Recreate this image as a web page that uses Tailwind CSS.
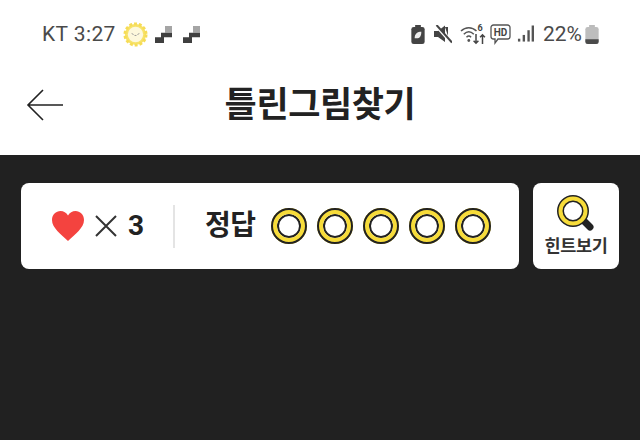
<!DOCTYPE html>
<html lang="ko">
<head>
    <meta charset="UTF-8">
    <title>틀린그림찾기</title>
    <script src="https://cdn.jsdelivr.net/npm/@tailwindcss/browser@4"></script>
</head>
<body class="w-[640px] h-[440px] overflow-hidden bg-white font-['Roboto','Noto_Sans_CJK_KR',sans-serif]">
    <!-- status bar -->
    <div class="h-[68px] pl-[42px] pr-[41px] flex items-center justify-between text-[#4a4a4a] leading-none">
        <div class="flex items-center">
            <span class="text-[21px] tracking-[0.4px]">KT 3:27</span>
            <svg class="ml-[7px]" width="25" height="25" viewBox="0 0 26 26">
                <circle cx="13" cy="13" r="11" fill="#f7e26a" stroke="#f6dc55" stroke-width="3" stroke-dasharray="3 2"/>
                <circle cx="13" cy="13" r="8" fill="#fdf8dc"/>
                <path d="M9 12l2 1M17 12l-2 1M12 14h2" stroke="#999" stroke-width="1" fill="none"/>
            </svg>
            <svg class="ml-[7px]" width="17" height="17" viewBox="0 0 17 17">
                <path d="M10 0h7v6.700h-7z" fill="#a5a5a5"/>
                <path d="M6 6.700h11v4.600H9V17H0v-5.700h6z" fill="#3f3f3f"/>
            </svg>
            <svg class="ml-[11px]" width="17" height="17" viewBox="0 0 17 17">
                <path d="M10 0h7v6.700h-7z" fill="#a5a5a5"/>
                <path d="M6 6.700h11v4.600H9V17H0v-5.700h6z" fill="#3f3f3f"/>
            </svg>
        </div>
        <div class="flex items-center">
            <svg width="14" height="19" viewBox="0 0 14 20">
                <rect x="4" y="0" width="6" height="3" fill="#444"/>
                <rect x="0" y="2" width="14" height="18" rx="2.500" fill="#444"/>
                <path d="M3.500 14c0-5 3-7 7-7 0 5-2 7.500-5.500 7z" fill="#eee"/>
            </svg>
            <svg class="ml-[9px]" width="18" height="19" viewBox="0 0 18 19">
                <path d="M0 6h4l7-5.500V17l-7-5H0z" fill="#444"/>
                <path d="M11 2h3v9z" fill="#444"/>
                <path d="M1 0l16 18" stroke="#fff" stroke-width="2.500"/>
                <path d="M2.500 0l15.500 17.500" stroke="#444" stroke-width="2"/>
            </svg>
            <svg class="ml-[8px]" width="26" height="23" viewBox="0 0 26 23">
                <path d="M1 8c4.500-4.500 11-4.500 15.500 0M3.800 11.200c3.200-3.200 6.800-3.200 10 0M6.500 14.200c1.600-1.600 3-1.600 4.600 0" stroke="#555" stroke-width="1.500" fill="none"/>
                <circle cx="8.800" cy="17.500" r="1.400" fill="#555"/>
                <text x="20" y="8" text-anchor="middle" font-size="9" font-weight="700" fill="#444" font-family="Roboto">6</text>
                <path d="M16 11v9M13.600 17.800l2.400 2.400 2.400-2.400M22.500 21v-9M20.100 14.200l2.400-2.400 2.400 2.400" stroke="#444" stroke-width="1.500" fill="none"/>
            </svg>
            <svg class="ml-[4px]" width="21" height="21" viewBox="0 0 21 21">
                <path d="M3.500 1h14a2.500 2.500 0 0 1 2.500 2.500v9a2.500 2.500 0 0 1-2.500 2.500H8l-3 4v-4H3.500A2.500 2.500 0 0 1 1 12.500v-9A2.500 2.500 0 0 1 3.500 1z" fill="none" stroke="#555" stroke-width="1.300"/>
                <text x="10.500" y="12" text-anchor="middle" font-size="10" font-weight="700" fill="#444" font-family="Roboto">HD</text>
            </svg>
            <svg class="ml-[6px]" width="17" height="20" viewBox="0 0 18 20">
                <rect x="1" y="15" width="2.500" height="3" fill="#555"/>
                <rect x="6" y="11" width="2.500" height="7" fill="#555"/>
                <rect x="11" y="6" width="2.500" height="12" fill="#555"/>
                <rect x="15.500" y="1" width="2.500" height="17" fill="#555"/>
            </svg>
            <span class="ml-[9px] text-[21px]">22%</span>
            <svg class="ml-[3px]" width="14" height="19" viewBox="0 0 14 20">
                <rect x="4" y="0" width="6" height="3" fill="#bbb"/>
                <rect x="0" y="2" width="14" height="18" rx="2.500" fill="#bdbdbd"/>
                <path d="M0 15h14v2.500a2.500 2.500 0 0 1-2.500 2.500h-9A2.500 2.500 0 0 1 0 17.500z" fill="#4a4a4a"/>
            </svg>
        </div>
    </div>

    <!-- title bar -->
    <div class="relative h-[87px] flex items-center justify-center pb-[12px]">
        <svg class="absolute left-[26px] top-[20px]" width="38" height="34" viewBox="0 0 38 34">
            <path d="M17 2L2 17l15 15M2 17h35" fill="none" stroke="#222" stroke-width="1.600"/>
        </svg>
        <h1 class="text-[35px] leading-none font-bold text-[#222] tracking-[-0.4px]">틀린그림찾기</h1>
    </div>

    <!-- game area -->
    <div class="h-[285px] bg-[#212121] pt-[28px] pl-[21px] pr-[21px] flex items-start gap-[14px]">
        <div class="w-[498px] h-[86px] bg-white rounded-[8px] flex items-center pl-[30px]">
            <svg width="34" height="32" viewBox="0 0 34 32">
                <path d="M17 31C10 24 1 18 1 10 1 4.500 5 1 9.500 1c3.200 0 5.800 1.500 7.500 4.500C18.700 2.500 21.300 1 24.500 1 29 1 33 4.500 33 10c0 8-9 14-16 21z" fill="#f4433f"/>
            </svg>
            <svg class="ml-[9px]" width="24" height="24" viewBox="0 0 24 24">
                <path d="M2 2l20 20M22 2L2 22" stroke="#333" stroke-width="2"/>
            </svg>
            <span class="ml-[10px] text-[28px] leading-none font-bold text-[#222]">3</span>
            <div class="ml-[29px] w-[2px] h-[43px] bg-[#e4e4e4]"></div>
            <span class="ml-[30px] text-[28px] leading-none font-bold text-[#222] tracking-[-0.5px]">정답</span>
            <div class="ml-[15px] flex gap-[10px]">
                <div class="w-[36px] h-[36px] rounded-full bg-white border-[6px] border-[#f7dc3a] outline-2 outline-[#222] -outline-offset-2 shadow-[inset_0_0_0_2px_#222]"></div>
                <div class="w-[36px] h-[36px] rounded-full bg-white border-[6px] border-[#f7dc3a] outline-2 outline-[#222] -outline-offset-2 shadow-[inset_0_0_0_2px_#222]"></div>
                <div class="w-[36px] h-[36px] rounded-full bg-white border-[6px] border-[#f7dc3a] outline-2 outline-[#222] -outline-offset-2 shadow-[inset_0_0_0_2px_#222]"></div>
                <div class="w-[36px] h-[36px] rounded-full bg-white border-[6px] border-[#f7dc3a] outline-2 outline-[#222] -outline-offset-2 shadow-[inset_0_0_0_2px_#222]"></div>
                <div class="w-[36px] h-[36px] rounded-full bg-white border-[6px] border-[#f7dc3a] outline-2 outline-[#222] -outline-offset-2 shadow-[inset_0_0_0_2px_#222]"></div>
            </div>
        </div>
        <div class="w-[86px] h-[86px] bg-white rounded-[8px] flex flex-col items-center pt-[10px]">
            <svg width="38" height="38" viewBox="0 0 38 38">
                <path d="M27 28l6 6" stroke="#222" stroke-width="7" stroke-linecap="round"/>
                <circle cx="16" cy="18" r="12.500" fill="#fff" stroke="#222" stroke-width="7"/>
                <circle cx="16" cy="18" r="12.500" fill="none" stroke="#f7dc3a" stroke-width="4"/>
            </svg>
            <span class="mt-[7px] text-[17.5px] leading-none font-bold text-[#333] tracking-[-0.4px]">힌트보기</span>
        </div>
    </div>
</body>
</html>
